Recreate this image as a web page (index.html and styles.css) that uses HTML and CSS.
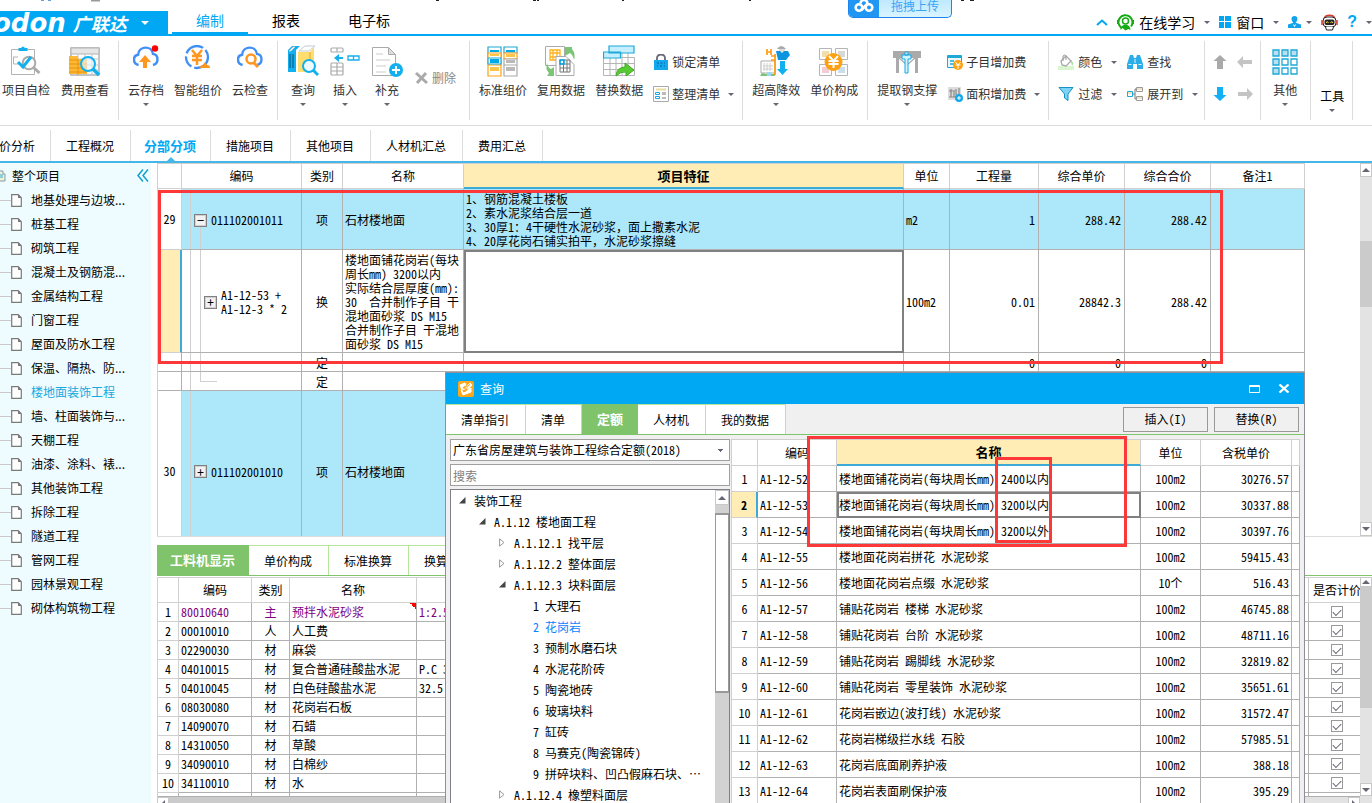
FILE: index.html
```html
<!DOCTYPE html>
<html lang="zh-CN">
<head>
<meta charset="utf-8">
<title>广联达 计价</title>
<link rel="stylesheet" href="styles.css">
</head>
<body>
<svg class="defs" aria-hidden="true">
  <symbol id="doc" viewBox="0 0 11 13"><path d="M.7.7h6.5l3.1 3.1v8.5H.7z" fill="#fff" stroke="#7a7a7a" stroke-width="1.2"/><path d="M7 .5v3.6h3.6z" fill="#7a7a7a"/></symbol>
  <symbol id="open" viewBox="0 0 7 7"><path d="M6.5 0v6.5H0z" fill="#444"/></symbol>
  <symbol id="shut" viewBox="0 0 6 9"><path d="M.6 .8v7.4L5 4.500z" fill="#fff" stroke="#999"/></symbol>
  <symbol id="cloud" viewBox="0 0 28 28"><path d="M6 21.500C-.5 20-.5 11.500 5.500 10.500 6 1 20 0 21.500 9.500c6.500 1 6.500 10.500 0 12" fill="none" stroke="#3f8ff7" stroke-width="2.600"/></symbol>
</svg>

<header class="top">
  <svg class="strip" width="1000" height="4" aria-hidden="true"><path d="M41 0h3M48 0h3" stroke="#6b9bd0" stroke-width="2"/><path d="M91 0h9" stroke="#999" stroke-width="3"/><path d="M436 0h3M533 0h3M537 0h2M622 0h2M749 0h2M961 0h3M970 0h4" stroke="#222" stroke-width="2"/></svg>
  <button class="brand"><span class="word">odon</span><span class="cn">广联达</span><i class="arrow"></i></button>
  <nav class="main-tabs">
    <button class="on">编制</button><button>报表</button><button>电子标</button>
  </nav>
  <div class="tools">
    <button aria-label="收起"><svg width="12" height="7" viewBox="0 0 12 7"><path d="M1 6l5-4.500L11 6" fill="none" stroke="#00a8f3" stroke-width="2"/></svg></button>
    <button class="study"><svg width="17" height="17" viewBox="0 0 17 17"><path d="M4.500 14A7 7 0 1 1 14 12.500" fill="none" stroke="#14ab14" stroke-width="2"/><circle cx="8.500" cy="7" r="3" fill="none" stroke="#14ab14" stroke-width="1.500"/><path d="M3.500 16c0-7 10-7 10 0l-2-1-3 1.500L5.500 14z" fill="#14ab14"/><path d="M.5 6v4M16.500 6v4" stroke="#14ab14"/></svg>在线学习<i class="arrow"></i></button>
    <button class="win"><svg width="12" height="12" viewBox="0 0 12 12"><path d="M0 0h5v5H0zM6 0h6v5H6zM0 6h5v6H0zM6 6h6v6H6z" fill="#00a8f3"/></svg>窗口<i class="arrow"></i></button>
    <button class="user" aria-label="用户"><svg width="13" height="12" viewBox="0 0 13 12"><path d="M6.500 0C2.500 0 3 4.500 5.300 6.800L0 8.500V12h13V8.500L7.700 6.800C10 4.500 10.500 0 6.500 0z" fill="#14a3ea"/><path d="M5.500 8.500l1 2 1-2" fill="none" stroke="#fff"/></svg><i class="arrow"></i></button>
    <button aria-label="助手"><svg width="17" height="17" viewBox="0 0 17 17"><path d="M3 5C4 0 13 0 14 5" fill="none" stroke="#e03a2f" stroke-width="1.500"/><rect x="2" y="3" width="13" height="10" rx="4" fill="#fff" stroke="#222"/><rect x="3.500" y="5.500" width="10" height="5.500" rx="2" fill="#222"/><path d="M5 9l1.200-1.500L7.500 9M9.500 9l1.200-1.500L12 9" fill="none" stroke="#ffe03a"/><path d="M1 6v5M16 6v5" stroke="#e03a2f" stroke-width="1.500"/><path d="M4.500 13l1 3h6l1-3" fill="#fff" stroke="#222"/></svg></button>
    <button class="help" aria-label="帮助">?</button><i class="arrow"></i>
  </div>
  <button class="upload"><svg width="30" height="17" viewBox="0 0 30 17"><path d="M0 0h30v17H3q-3 0-3-3z" fill="#2196f3"/><g fill="none" stroke="#fff" stroke-width="2.600"><circle cx="10" cy="7.500" r="3.300"/><circle cx="20" cy="7.500" r="3.300"/><path d="M11.500 3.500a3.500 3.500 0 1 1 7 0L12.500 10"/></g></svg><span>拖拽上传</span></button>
</header>

<section class="ribbon">
  <div class="group first">
    <button class="big"><svg viewBox="0 0 32 32"><path d="M1.500 4.500h23v25h-23z" fill="#fff" stroke="#b3b3b3"/><path d="M8.500 5V3h2.500q2-3 4 0h2.500v3h-9z" fill="#12b0ee"/><path d="M3 12h5M3.500 12v7h5" fill="none" stroke="#b3b3b3"/><circle cx="19" cy="18" r="6.300" fill="#fff" stroke="#aaa" stroke-width="2"/><path d="M8 17l5 5 8-10" fill="none" stroke="#12b0ee" stroke-width="3"/><path d="M23.500 22.500l6 5.500" stroke="#aaa" stroke-width="3"/></svg>项目自检</button>
    <button class="big"><svg viewBox="0 0 32 32"><path d="M2 3h28v27H2z" fill="#fff" stroke="#b3b3b3" stroke-width="1.500"/><path d="M2 3h28v6H2z" fill="#e6e6e6" stroke="#b3b3b3"/><path d="M2 14h28M2 20h28M2 25h28M9 9v21M16 9v21M23 9v21" stroke="#c4c4c4"/><path d="M0 11h9v3h9v15H0z" fill="#ffb834"/><path d="M0 15h9M0 19h18M0 23h18M0 27h18M9 14v16" stroke="#e6930e"/><circle cx="19" cy="19" r="7" fill="#e5f5fd" fill-opacity=".65" stroke="#12b0ee" stroke-width="2"/><path d="M24 24l6 6" stroke="#12b0ee" stroke-width="3.500"/></svg>费用查看</button>
  </div>
  <div class="group">
    <button class="big"><svg viewBox="0 0 32 32"><use href="#cloud" x="3" y="0" width="26" height="26"/><path d="M15 10l-6 7h4v6h4v-6h4z" fill="#ff961f"/><circle cx="25" cy="3.500" r="3.200" fill="#f00"/></svg>云存档<i class="arrow"></i></button>
    <button class="big"><svg viewBox="0 0 32 32"><circle cx="15" cy="12" r="11" fill="none" stroke="#3f8ff7" stroke-width="2.300" stroke-dasharray="20 3 12 3"/><path d="M10 5l5 6 5-6M10 11h10M10 15h10M15 11v9" fill="none" stroke="#ff961f" stroke-width="2.500"/><path d="M18 23q0-3 3-3 2-5 4 0 3 0 3 3z" fill="#ff961f"/></svg>智能组价</button>
    <button class="big"><svg viewBox="0 0 32 32"><use href="#cloud" x="3" y="0" width="26" height="26"/><circle cx="17" cy="14" r="4.500" fill="#fff" stroke="#ff961f" stroke-width="2.500"/><path d="M20 18l4 4" stroke="#ff961f" stroke-width="3"/></svg>云检查</button>
  </div>
  <div class="group">
    <button class="big"><svg viewBox="0 0 32 32"><path d="M1 5l4-4h8L9 5v22H1z" fill="#12b0ee"/><path d="M2 6l4-4h2L4 6zM12 6l6-5h10l-6 5z" fill="#fff" stroke="#c5cbd0"/><path d="M3 9v14M6 9v14" stroke="#07507c"/><path d="M11 7h12l4-5v25H11z" fill="#ffdd6e"/><path d="M23 7v20" stroke="#e3a726"/><circle cx="22" cy="21" r="6" fill="#eefaff" stroke="#12b0ee" stroke-width="2"/><path d="M26 25l5 5" stroke="#12b0ee" stroke-width="3"/></svg>查询<i class="arrow"></i></button>
    <button class="big"><svg viewBox="0 0 32 32"><g fill="#fff" stroke="#aaa" stroke-width="1.200"><rect x="2" y="3" width="12" height="4" rx="1"/><rect x="2" y="18" width="12" height="12" rx="1"/><path d="M2 22h12M2 26h12M8 18v12M8 3v4"/></g><path d="M5 13l5-4v3h4v2h-4v3z" fill="#12b0ee"/><path d="M19 11h11v4H19zM24.500 11v4" fill="#fff" stroke="#12b0ee" stroke-width="1.300"/></svg>插入<i class="arrow"></i></button>
    <button class="big"><svg viewBox="0 0 32 32"><path d="M1.500 2.500h16l7 7v21h-23z" fill="#fff" stroke="#aaa"/><path d="M17.500 2.500v7h7z" fill="#ddd" stroke="#aaa"/><path d="M5 9h7M5 15h14M5 21h10M5 27h10" stroke="#ddd" stroke-width="1.500"/><circle cx="25" cy="25" r="7" fill="#12b0ee"/><path d="M25 21v8M21 25h8" stroke="#fff" stroke-width="2"/></svg>补充<i class="arrow"></i></button>
    <button class="small del"><svg viewBox="0 0 16 16"><path d="M3 3l11 10M13 3L4 13" stroke="#aaa" stroke-width="3"/></svg>删除</button>
  </div>
  <div class="group lists">
    <button class="big"><svg viewBox="0 0 32 32"><g fill="#fff" stroke-width="1.200"><path d="M1 2h13v10H1zM17 2h13v6H17z" stroke="#1ca9d6"/><path d="M17 8h13v6H17z" stroke="#ffa012"/><path d="M17 14h13v17H17zM17 20h13" stroke="#aaa"/><path d="M1 8h13v23H1zM1 20h13" stroke="#ffa012"/><path d="M1 13h13v6H1z" stroke="#1ca9d6"/></g><path d="M3 5h9v2H3zM19 5h9v2h-9zM3 14h9v4H3z" fill="#00a8e8"/><path d="M3 9h9v2H3zM19 9h9v3h-9zM3 22h9v4H3z" fill="#ffc54a"/><path d="M19 15h9v3h-9zM19 22h9v4h-9z" fill="#b9b9b9"/></svg>标准组价</button>
    <button class="big"><svg viewBox="0 0 32 32"><path d="M.500 1.500h19v19H.500z" fill="#fff" stroke="#aaa"/><path d="M5 5h10v10H5zM5 8h10M5 12h10M8 5v10M12 5v10" fill="none" stroke="#ffb31c" stroke-width="1.300"/><path d="M11 11.500h10l8 8v11H11z" fill="#fff" stroke="#aaa"/><path d="M15 15h10v12H15zM15 19h10M15 23h10M18.500 15v12M22 15v12" fill="none" stroke="#777"/><path d="M15 15h4v4h-4z" fill="none" stroke="#00a8e8" stroke-width="1.500"/><path d="M20 2h7v2q4 5 2 11-1-5-4-7l-5 3zM2 18q1 5 4 6l3-2v9H2l2-3q-4-4-2-10z" fill="#7cc576"/></svg>复用数据</button>
    <button class="big"><svg viewBox="0 0 32 32"><path d="M.500 12.500h31v18H.500zM.500 18.500h31M.500 24.500h31M7 12.500v18M13 12.500v18M19 7v23M25 7v23" fill="#fff" stroke="#b5b5b5"/><path d="M6 1h25v7H6zM.500 7h17v6H.500z" fill="#c5efff" stroke="#1ca9d6" stroke-width="1.200"/><path d="M13 31q1-9 9-9v-4l9 7-8 6v-4q-5-1-10 4z" fill="#58cb31" stroke="#3daa25"/></svg>替换数据</button>
    <div class="stack">
      <button class="small"><svg viewBox="0 0 16 16"><path d="M4 7V4a4 3.500 0 0 1 8 0v3" fill="none" stroke="#666674" stroke-width="1.800"/><path d="M1 6h14v10H1z" fill="#12a8ee"/><path d="M4 9h2m1.500 0h2M11 9h1M4 12h1m2 0h2m2 0h1" stroke="#095f9b"/></svg>锁定清单</button>
      <button class="small"><svg viewBox="0 0 16 16"><path d="M.500.500h15v15H.500z" fill="#fff" stroke="#aaa"/><path d="M3 2.500h10v2H3z" fill="#eadba1"/><path d="M2.500 6.500h4v2h-4zM2.500 10.500h4v2h-4z" fill="#fff" stroke="#1aa9e0"/><path d="M9 6h4v3H9zM9 11h4v2H9z" fill="#bbb"/></svg>整理清单<i class="arrow"></i></button>
    </div>
  </div>
  <div class="group">
    <button class="big"><svg viewBox="0 0 32 32"><path d="M1 16h14v12H1z" fill="#fff" stroke="#aaa"/><path d="M4 18v8M7 18v8M10 18v8M3 21h10M3 24h10" stroke="#ccc"/><path d="M0 31q2-5 5-2l10 0v2z" fill="#7cc576"/><path d="M7 27h4v4H7z" fill="#9bd9f2"/><path d="M15 9v21M11 15h5M16 11h-5M7 4v6M11 4v6M7 7h4" fill="none" stroke="#ff9c12" stroke-width="1.700"/><path d="M17 4q4-6 9 0z" fill="#aaa"/><path d="M19 4h6v2q-3 2-6 0z" fill="#ddd"/><path d="M16 6h4l2 2 2-2h4l2 4-4 5h-8z" fill="#0d94df"/><path d="M20 16h5v8h3l-5.500 6-5.500-6h3z" fill="#12b0ee"/></svg>超高降效<i class="arrow"></i></button>
    <button class="big"><svg viewBox="0 0 32 32"><g fill="#fff" stroke="#b5b5b5"><path d="M1.500 3.500h12v11h-12zM17.500 3.500h12v11h-12zM1.500 19.500h12v11h-12zM17.500 19.500h12v11h-12z"/></g><path d="M4 6h7v6H4z" fill="#f1deab"/><path d="M20 6h7v6h-7z" fill="#d8d8d8"/><path d="M4 22h7v6H4z" fill="#f2cdd1"/><path d="M20 22h7v6h-7z" fill="#c9deef"/><circle cx="15.500" cy="17" r="9" fill="#ffa10e"/><path d="M11 11l4.500 5 4.500-5M10.500 16h10M10.500 19h10M15.500 16v7" fill="none" stroke="#fff" stroke-width="2"/></svg>单价构成</button>
  </div>
  <div class="group fees">
    <button class="big"><svg viewBox="0 0 32 32"><path d="M2 6h28v7H2zM5 12h3v16H5zM24 12h3v16h-3z" fill="#aaa"/><path d="M8 13l8 7 8-7" fill="none" stroke="#aaa" stroke-width="1.300"/><path d="M11 10h9v4h-3v14h-3V14h-3zM14 7h3v3h-3z" fill="#d5f3ff" stroke="#12a8e4"/></svg>提取钢支撑<i class="arrow"></i></button>
    <div class="stack">
      <button class="small"><svg viewBox="0 0 16 16"><path d="M.500 1.500h14v12H.500z" fill="#e8f8ff" stroke="#1ca9d6"/><path d="M1 2h13v2H1z" fill="#1ca9d6"/><path d="M3 7h4M3 10h4" stroke="#1ca9d6" stroke-width="1.500"/><circle cx="11" cy="11" r="5" fill="#ffa10e"/><path d="M8.500 8l2.500 3 2.500-3M8.500 11h5M11 11v4" fill="none" stroke="#fff"/></svg>子目增加费</button>
      <button class="small"><svg viewBox="0 0 16 16"><path d="M1 1h13v13H1z" fill="#ddd"/><path d="M2 5h4M4 3v8M7 4v7M9 3v6M12 2v8M2 11h8" stroke="#888" stroke-width="1.200"/><circle cx="12" cy="12" r="4" fill="#12a8ee"/><path d="M12 10v4M10 12h4" stroke="#fff"/></svg>面积增加费<i class="arrow"></i></button>
    </div>
  </div>
  <div class="group half">
    <div class="stack">
      <button class="small"><svg viewBox="0 0 16 16"><path d="M0 12h16v4H0z" fill="#d9f5cf"/><path d="M3 7l5-5 5 5-5 5-4-1z" fill="#fff" stroke="#aaa" stroke-width="1.300"/><path d="M5 7V2q2-2 3 0v4" fill="none" stroke="#999"/><path d="M13 6q3 3 1 6z" fill="#8ac97b"/></svg>颜色<i class="arrow"></i></button>
      <button class="small"><svg viewBox="0 0 16 16"><path d="M1 1.500h14L10 8v6.500L6.500 12V8z" fill="#7bd3f5" stroke="#1591c4"/></svg>过滤<i class="arrow"></i></button>
    </div>
    <div class="stack">
      <button class="small"><svg viewBox="0 0 16 16"><path d="M3 1h3l1 3h2l1-3h3l3 9v5h-6v-5H6v5H0v-5z" fill="#2aaeea"/><path d="M1.500 10.500h3M11.500 10.500h3M8 5v4" stroke="#dff5ff"/></svg>查找</button>
      <button class="small"><svg viewBox="0 0 16 16"><path d="M5 8h3M8 3v10M8 3h2M8 13h2" fill="none" stroke="#777"/><path d="M.500 5.500h5v5h-5z" fill="#fff" stroke="#1ca9d6"/><path d="M9.500 1.500h6v4h-6zM9.500 10.500h6v4h-6z" fill="#fff" stroke="#999"/><path d="M10 3h5M10 12h5M1 7h4" stroke="#e3c689"/></svg>展开到<i class="arrow"></i></button>
    </div>
  </div>
  <div class="group arrows">
    <button aria-label="上移"><svg viewBox="0 0 16 16"><path d="M8 1l6.500 6H11v8H5V7H1.500z" fill="#aaa"/></svg></button>
    <button aria-label="左移"><svg viewBox="0 0 16 16"><path d="M0 8l6-6v4h9v4H6v4z" fill="#c4c4c4"/></svg></button>
    <button aria-label="下移"><svg viewBox="0 0 16 16"><path d="M8 15l6.500-6H11V1H5v8H1.500z" fill="#12b0f4"/></svg></button>
    <button aria-label="右移"><svg viewBox="0 0 16 16"><path d="M16 8l-6-6v4H1v4h9v4z" fill="#c4c4c4"/></svg></button>
  </div>
  <div class="group other">
    <button class="big"><svg viewBox="0 0 32 32"><g stroke="#1ca9d6" stroke-width="1.300" fill="#fff"><path d="M13 14h6v6h-6zM22 14h6v6h-6zM13 23h6v6h-6zM22 23h6v6h-6z"/><path d="M4 5h6v6H4zM13 5h6v6h-6zM22 5h6v6h-6zM4 14h6v6H4zM4 23h6v6H4z" fill="#b9dff1"/></g></svg>其他<i class="arrow"></i></button>
  </div>
  <div class="group kit">
    <button class="big plain">工具<i class="arrow"></i></button>
  </div>
</section>

<nav class="doc-tabs">
  <button class="cut">价分析</button><button>工程概况</button><button class="on">分部分项</button><button>措施项目</button><button>其他项目</button><button>人材机汇总</button><button>费用汇总</button>
</nav>

<main class="work">
  <aside class="side">
    <div class="root"><svg width="8" height="12" viewBox="0 0 8 12"><path d="M0 1h3v3h2v7H0" fill="#e8f3d8" stroke="#8a9aa5"/><path d="M0 5h3M0 7h3" stroke="#3ca6d8"/></svg><span>整个项目</span><svg class="fold" width="12" height="13" viewBox="0 0 12 13"><path d="M6 .5L1 6.500l5 6M11 .5L6 6.500l5 6" fill="none" stroke="#12a0cc" stroke-width="1.500"/></svg></div>
    <ul>
      <li><svg><use href="#doc"/></svg>地基处理与边坡...</li>
      <li><svg><use href="#doc"/></svg>桩基工程</li>
      <li><svg><use href="#doc"/></svg>砌筑工程</li>
      <li><svg><use href="#doc"/></svg>混凝土及钢筋混...</li>
      <li><svg><use href="#doc"/></svg>金属结构工程</li>
      <li><svg><use href="#doc"/></svg>门窗工程</li>
      <li><svg><use href="#doc"/></svg>屋面及防水工程</li>
      <li><svg><use href="#doc"/></svg>保温、隔热、防...</li>
      <li class="on"><svg><use href="#doc"/></svg>楼地面装饰工程</li>
      <li><svg><use href="#doc"/></svg>墙、柱面装饰与...</li>
      <li><svg><use href="#doc"/></svg>天棚工程</li>
      <li><svg><use href="#doc"/></svg>油漆、涂料、裱...</li>
      <li><svg><use href="#doc"/></svg>其他装饰工程</li>
      <li><svg><use href="#doc"/></svg>拆除工程</li>
      <li><svg><use href="#doc"/></svg>隧道工程</li>
      <li><svg><use href="#doc"/></svg>管网工程</li>
      <li><svg><use href="#doc"/></svg>园林景观工程</li>
      <li><svg><use href="#doc"/></svg>砌体构筑物工程</li>
    </ul>
  </aside>

  <div class="panes">
    <section class="bill">
      <div class="bill-scroll">
      <table class="grid bill-grid">
        <colgroup><col class="w-no"><col class="w-code"><col class="w-kind"><col class="w-name"><col><col class="w-unit"><col class="w-qty"><col class="w-price"><col class="w-price"><col class="w-note"></colgroup>
        <thead><tr><th></th><th>编码</th><th>类别</th><th>名称</th><th class="hot">项目特征</th><th>单位</th><th>工程量</th><th>综合单价</th><th>综合合价</th><th>备注1</th></tr></thead>
        <tbody>
          <tr class="r29 blue"><td class="no">29</td><td class="tree t-open"><div><button class="exp">−</button>011102001011</div></td><td class="c">项</td><td>石材楼地面</td><td>1、钢筋混凝土楼板<br>2、素水泥浆结合层一道<br>3、30厚1：4干硬性水泥砂浆<span class="full">，</span>面上撒素水泥<br>4、20厚花岗石铺实拍平<span class="full">，</span>水泥砂浆擦缝</td><td>m2</td><td class="r">1</td><td class="r">288.42</td><td class="r">288.42</td><td></td></tr>
          <tr class="rsub"><td class="no cur"></td><td class="tree t-sub"><div><button class="exp">+</button><span>A1-12-53 +<br>A1-12-3 * 2</span></div></td><td class="c">换</td><td>楼地面铺花岗岩(每块<br>周长mm) 3200以内<br>实际结合层厚度(mm):<br>30&nbsp; 合并制作子目 干<br>混地面砂浆 DS M15<br>合并制作子目 干混地<br>面砂浆 DS M15</td><td class="sel"></td><td>100m2</td><td class="r">0.01</td><td class="r">28842.3</td><td class="r">288.42</td><td></td></tr>
          <tr class="rmin"><td></td><td class="tree t-line"></td><td class="c">定</td><td></td><td></td><td></td><td class="r">0</td><td class="r">0</td><td class="r">0</td><td></td></tr>
          <tr class="rmin"><td></td><td class="tree t-end"></td><td class="c">定</td><td></td><td></td><td></td><td></td><td></td><td></td><td></td></tr>
          <tr class="r30 blue"><td class="no">30</td><td class="tree"><div><button class="exp">+</button>011102001010</div></td><td class="c">项</td><td>石材楼地面</td><td></td><td></td><td></td><td></td><td></td><td></td></tr>
        </tbody>
      </table>
      </div>
      <div class="vbar"><i class="up"></i><b></b><i class="down"></i></div>
    </section>

    <nav class="sub-tabs"><button class="on">工料机显示</button><button>单价构成</button><button>标准换算</button><button>换算信息</button></nav>

    <section class="detail">
      <div class="detail-scroll">
      <table class="grid detail-grid">
        <colgroup><col class="d-no"><col class="d-code"><col class="d-kind"><col class="d-name"><col><col class="d-check"></colgroup>
        <thead><tr><th></th><th>编码</th><th>类别</th><th>名称</th><th></th><th class="last">是否计价</th></tr></thead>
        <tbody>
          <tr class="main-mat"><td class="no">1</td><td>80010640</td><td class="c">主</td><td class="flag">预拌水泥砂浆</td><td>1:2.5</td><td class="c"><input type="checkbox" aria-label="是否计价 1" checked></td></tr>
          <tr><td class="no">2</td><td>00010010</td><td class="c">人</td><td>人工费</td><td></td><td class="c"><input type="checkbox" aria-label="是否计价 2" checked></td></tr>
          <tr><td class="no">3</td><td>02290030</td><td class="c">材</td><td>麻袋</td><td></td><td class="c"><input type="checkbox" aria-label="是否计价 3" checked></td></tr>
          <tr><td class="no">4</td><td>04010015</td><td class="c">材</td><td>复合普通硅酸盐水泥</td><td>P.C 32.5</td><td class="c"><input type="checkbox" aria-label="是否计价 4" checked></td></tr>
          <tr><td class="no">5</td><td>04010045</td><td class="c">材</td><td>白色硅酸盐水泥</td><td>32.5</td><td class="c"><input type="checkbox" aria-label="是否计价 5" checked></td></tr>
          <tr><td class="no">6</td><td>08030080</td><td class="c">材</td><td>花岗岩石板</td><td></td><td class="c"><input type="checkbox" aria-label="是否计价 6" checked></td></tr>
          <tr><td class="no">7</td><td>14090070</td><td class="c">材</td><td>石蜡</td><td></td><td class="c"><input type="checkbox" aria-label="是否计价 7" checked></td></tr>
          <tr><td class="no">8</td><td>14310050</td><td class="c">材</td><td>草酸</td><td></td><td class="c"><input type="checkbox" aria-label="是否计价 8" checked></td></tr>
          <tr><td class="no">9</td><td>34090010</td><td class="c">材</td><td>白棉纱</td><td></td><td class="c"><input type="checkbox" aria-label="是否计价 9" checked></td></tr>
          <tr><td class="no">10</td><td>34110010</td><td class="c">材</td><td>水</td><td></td><td class="c"><input type="checkbox" aria-label="是否计价 10" checked></td></tr>
          <tr><td></td><td></td><td></td><td></td><td></td><td></td></tr>
        </tbody>
      </table>
      <div class="hbar"><i class="left"></i><b></b><i class="right"></i></div>
      </div>
      <div class="vbar"><i class="up"></i><b></b><i class="down"></i></div>
    </section>
  </div>

  <section class="dialog" role="dialog" aria-labelledby="dlg-title">
    <header class="title">
      <svg width="16" height="16" viewBox="0 0 16 16"><rect width="16" height="16" rx="2" fill="#fba919"/><path d="M2 4l5-2 1 2-4 2 2 3 6-7 2 2-6 7-3 1zM3 9l2 5 8-3V7" fill="#fff" stroke="#fff"/><path d="M5 11l7-8" stroke="#fba919"/></svg>
      <h2 id="dlg-title">查询</h2>
      <button class="max" aria-label="最大化"><svg width="11" height="8" viewBox="0 0 11 8"><path d="M.500.500h10v7H.500zM0 1.500h11" fill="none" stroke="#fff"/></svg></button>
      <button aria-label="关闭"><svg width="12" height="9" viewBox="0 0 12 9"><path d="M1.500.5l9 8M10.500.5l-9 8" stroke="#fff" stroke-width="2.300"/></svg></button>
    </header>
    <div class="bar">
      <nav class="q-tabs"><button>清单指引</button><button>清单</button><button class="on">定额</button><button>人材机</button><button>我的数据</button></nav>
      <button class="act">插入(I)</button><button class="act">替换(R)</button>
    </div>
    <div class="q-body">
      <div class="q-left">
        <select aria-label="定额库"><option>广东省房屋建筑与装饰工程综合定额(2018)</option></select>
        <input type="text" placeholder="搜索" aria-label="搜索">
        <div class="q-tree">
          <ul>
            <li class="l1"><svg width="7" height="7"><use href="#open"/></svg>装饰工程</li>
            <li class="l2"><svg width="7" height="7"><use href="#open"/></svg>A.1.12 楼地面工程</li>
            <li class="l3"><svg width="6" height="9"><use href="#shut"/></svg>A.1.12.1 找平层</li>
            <li class="l3"><svg width="6" height="9"><use href="#shut"/></svg>A.1.12.2 整体面层</li>
            <li class="l3 l3o"><svg width="7" height="7"><use href="#open"/></svg>A.1.12.3 块料面层</li>
            <li class="l4">1 大理石</li>
            <li class="l4 on">2 花岗岩</li>
            <li class="l4">3 预制水磨石块</li>
            <li class="l4">4 水泥花阶砖</li>
            <li class="l4">5 陶瓷地砖</li>
            <li class="l4">6 玻璃块料</li>
            <li class="l4">7 缸砖</li>
            <li class="l4">8 马赛克(陶瓷锦砖)</li>
            <li class="l4">9 拼碎块料、凹凸假麻石块、⋯</li>
            <li class="l3"><svg width="6" height="9"><use href="#shut"/></svg>A.1.12.4 橡塑料面层</li>
          </ul>
          <div class="tbar"><i class="up"></i><b></b></div>
        </div>
      </div>
      <div class="q-right">
        <table class="grid q-grid">
          <colgroup><col class="q-no"><col class="q-code"><col><col class="q-unit"><col class="q-price"><col class="q-end"></colgroup>
          <thead><tr><th></th><th>编码</th><th class="hot">名称</th><th>单位</th><th>含税单价</th><th></th></tr></thead>
          <tbody>
            <tr><td class="no">1</td><td>A1-12-52</td><td>楼地面铺花岗岩(每块周长mm) 2400以内</td><td class="c">100m2</td><td class="r">30276.57</td><td></td></tr>
            <tr><td class="no cur">2</td><td>A1-12-53</td><td class="sel">楼地面铺花岗岩(每块周长mm) 3200以内</td><td class="c">100m2</td><td class="r">30337.88</td><td></td></tr>
            <tr><td class="no">3</td><td>A1-12-54</td><td>楼地面铺花岗岩(每块周长mm) 3200以外</td><td class="c">100m2</td><td class="r">30397.76</td><td></td></tr>
            <tr><td class="no">4</td><td>A1-12-55</td><td>楼地面花岗岩拼花 水泥砂浆</td><td class="c">100m2</td><td class="r">59415.43</td><td></td></tr>
            <tr><td class="no">5</td><td>A1-12-56</td><td>楼地面花岗岩点缀 水泥砂浆</td><td class="c">10个</td><td class="r">516.43</td><td></td></tr>
            <tr><td class="no">6</td><td>A1-12-57</td><td>铺贴花岗岩 楼梯 水泥砂浆</td><td class="c">100m2</td><td class="r">46745.88</td><td></td></tr>
            <tr><td class="no">7</td><td>A1-12-58</td><td>铺贴花岗岩 台阶 水泥砂浆</td><td class="c">100m2</td><td class="r">48711.16</td><td></td></tr>
            <tr><td class="no">8</td><td>A1-12-59</td><td>铺贴花岗岩 踢脚线 水泥砂浆</td><td class="c">100m2</td><td class="r">32819.82</td><td></td></tr>
            <tr><td class="no">9</td><td>A1-12-60</td><td>铺贴花岗岩 零星装饰 水泥砂浆</td><td class="c">100m2</td><td class="r">35651.61</td><td></td></tr>
            <tr><td class="no">10</td><td>A1-12-61</td><td>花岗岩嵌边(波打线) 水泥砂浆</td><td class="c">100m2</td><td class="r">31572.47</td><td></td></tr>
            <tr><td class="no">11</td><td>A1-12-62</td><td>花岗岩梯级拦水线 石胶</td><td class="c">100m2</td><td class="r">57985.51</td><td></td></tr>
            <tr><td class="no">12</td><td>A1-12-63</td><td>花岗岩底面刷养护液</td><td class="c">100m2</td><td class="r">388.18</td><td></td></tr>
            <tr><td class="no">13</td><td>A1-12-64</td><td>花岗岩表面刷保护液</td><td class="c">100m2</td><td class="r">395.29</td><td></td></tr>
          </tbody>
        </table>
      </div>
    </div>
  </section>

  <div class="mark m1"></div>
  <div class="mark m2"></div>
  <div class="mark m3"></div>
</main>
</body>
</html>
```
FILE: styles.css
```css
* { box-sizing: border-box; }
body {
  margin: 0;
  height: 100vh;
  display: flex;
  flex-direction: column;
  overflow: hidden;
  background: #fff;
  color: #000;
  font: 12px/14px "Noto Sans CJK SC", sans-serif;
}
button, input, select { font: inherit; color: inherit; }
button { border: 0; background: none; padding: 0; white-space: nowrap; }
ul { list-style: none; margin: 0; padding: 0; }
h2 { margin: 0; font: inherit; }
svg { display: block; flex: none; }
.defs { position: absolute; width: 0; height: 0; }
.arrow { flex: none; width: 0; height: 0; border: 3px solid transparent; border-top-color: #666674; border-bottom: 0; }

/* title row */
.top { flex: none; position: relative; display: flex; align-items: flex-end; height: 36px; border-bottom: 2px solid #00a8f3; }
.strip { position: absolute; left: 0; top: 0; }
.brand { display: flex; align-items: center; width: 168px; height: 23px; overflow: hidden; background: #00a8f3; color: #fff; }
.brand .word { margin-left: -7px; font: italic 700 26px/20px "DejaVu Sans", sans-serif; }
.brand .cn { margin-left: 7px; font-size: 18px; font-style: italic; font-weight: 700; }
.brand .arrow { margin-left: 14px; border-width: 4px 4px 0; border-top-color: #fff; }
.main-tabs { display: flex; margin-left: 4px; font-size: 14px; }
.main-tabs button { height: 25px; padding: 0 24px 1px; border-bottom: 2px solid transparent; }
.main-tabs .on { color: #00a8f3; border-color: #00a8f3; }
.tools { display: flex; align-items: center; gap: 9px; height: 24px; margin-left: auto; font-size: 14px; }
.tools button { display: flex; align-items: center; gap: 5px; }
.study .arrow, .win .arrow { margin-left: 4px; }
.tools .help { color: #00a8f3; font: 700 16px/18px "Liberation Sans", sans-serif; }
.upload { position: absolute; left: 848px; top: 0; display: flex; height: 18px; border: 1px solid #1c86ee; border-top: 0; border-radius: 0 0 5px 5px; overflow: hidden; background: linear-gradient(#bfe9ff, #d9f4ff); color: #3ba4f5; }
.upload span { padding: 0 12px; line-height: 12px; }

/* ribbon */
.ribbon { flex: none; display: flex; height: 90px; padding-top: 5px; border-bottom: 1px solid #dcdcdc; color: #333; }
.group { display: flex; gap: 10px; height: 79px; padding: 0 9px; border-right: 1px solid #dcdcdc; }
.group.first { padding-left: 2px; gap: 11px; }
.big { display: flex; flex-direction: column; align-items: center; min-width: 32px; padding-top: 4px; height: 70px; line-height: 18px; color: inherit; }
.big svg { width: 32px; height: 32px; margin-bottom: 4px; }
.big .arrow { margin-top: 4px; }
.small { display: flex; align-items: center; gap: 3px; height: 18px; color: inherit; }
.small svg { width: 16px; height: 16px; }
.small .arrow { margin-left: 5px; }
.stack { display: flex; flex-direction: column; gap: 14px; padding-top: 12px; }
.del { margin: 28px 4px 0 0; color: #888; }
.lists { padding-right: 8px; }
.fees { gap: 10px; padding-right: 8px; }
.half { padding: 0 6px 0 9px; }
.half .stack .small { gap: 4px; }
.arrows { display: grid; grid-template-columns: 16px 16px; column-gap: 9px; row-gap: 16px; align-content: start; padding: 13px 7px 0; }
.arrows svg { width: 16px; height: 16px; }
.other { padding: 0 9px 0 8px; }
.kit { padding: 0 8px 0 9px; }
.plain { padding-top: 46px; color: #000; min-width: 24px; }

/* document tabs */
.doc-tabs { flex: none; display: flex; height: 37px; padding-top: 4px; border-bottom: 2px solid #45b6e8; }
.doc-tabs button { position: relative; padding: 0 16px 0 15px; border-right: 1px solid #dcdcdc; }
.doc-tabs .cut { padding: 0 15px 0 0; margin-left: -1px; }
.doc-tabs .on { color: #00a8f3; font-weight: 700; font-size: 13px; padding: 0 14px 0 13px; }
.doc-tabs .on::after { content: ""; position: absolute; left: 50%; bottom: 0; margin-left: -4px; border: 4px solid transparent; border-bottom-color: #45b6e8; border-top: 0; }

/* work area */
.work { flex: 1; min-height: 0; position: relative; display: flex; gap: 6px; font-feature-settings: "hwid"; }
.full { font-feature-settings: normal; }
.side { flex: none; width: 151px; background: #effcff; font-feature-settings: normal; }
.root { display: flex; align-items: center; height: 25px; }
.root span { margin-left: 4px; }
.fold { margin-left: auto; margin-right: 2px; }
.side li { display: flex; align-items: center; height: 24px; white-space: nowrap; }
.side li::before { content: ""; width: 11px; border-top: 1px solid #c9c9c9; }
.side li svg { width: 11px; height: 13px; margin-right: 9px; }
.side .on { color: #12aadf; }
.panes { flex: 1; min-width: 0; display: flex; flex-direction: column; }

.grid { width: 100%; table-layout: fixed; border-collapse: separate; border-spacing: 0; border-left: 1px solid #d0d0d0; }
.grid th, .grid td { padding: 0 2px; border-right: 1px solid #b0b0b0; border-bottom: 1px solid #b0b0b0; text-align: left; font-weight: 400; white-space: nowrap; overflow: hidden; }
.grid th { border-color: #d0d0d0; text-align: center; padding: 0; }
.grid .hot { background: #ffedb5; font-weight: 700; font-size: 13px; border-bottom: 2px solid #3da9d6; }
.grid .c { text-align: center; }
.grid .r { text-align: right; }
.grid .no { text-align: center; border-color: #d0d0d0; padding: 0; }
.grid .cur { background: #ffedb5; border-right: 2px solid #3da9d6; font-weight: 700; }
.grid .sel { outline: 2px solid #808080; outline-offset: -2px; }

.bill { flex: none; display: flex; height: 374px; gap: 55px; border-bottom: 1px solid #dcdcdc; }
.bill-scroll { flex: 1; min-width: 0; overflow: hidden; border-top: 1px solid #d0d0d0; }
.w-no { width: 24px; } .w-code { width: 120px; } .w-kind { width: 41px; } .w-name { width: 121px; }
.w-unit { width: 46px; } .w-qty { width: 89px; } .w-price { width: 86px; } .w-note { width: 94px; }
.bill-grid th { height: 25px; }
.bill-grid td { padding-top: 2px; }
.bill-grid td.r { padding-right: 3px; }
.r29 { height: 61px; } .rsub { height: 103px; } .rmin { height: 19px; } .r30 { height: 160px; }
.blue td:not(.no) { background-color: #ade8fa; }
.grid .tree { padding-left: 12px; background-repeat: no-repeat; background-image: linear-gradient(#d0d0d0, #d0d0d0); background-size: 1px 100%; background-position: 8px 0; }
.tree div { display: flex; align-items: center; gap: 4px; }
.grid .t-sub { padding-left: 22px; }
.grid .t-sub, .grid .t-line { background-image: linear-gradient(#d0d0d0, #d0d0d0), linear-gradient(#d0d0d0, #d0d0d0); background-size: 1px 100%; background-position: 8px 0, 18px 0; }
.grid .t-open { background-image: linear-gradient(#d0d0d0, #d0d0d0), linear-gradient(#d0d0d0, #d0d0d0); background-size: 1px 100%, 1px 50%; background-position: 8px 0, 18px 100%; }
.grid .t-end { background-image: linear-gradient(#d0d0d0, #d0d0d0), linear-gradient(#d0d0d0, #d0d0d0), linear-gradient(#d0d0d0, #d0d0d0); background-size: 1px 100%, 1px 50%, 17px 1px; background-position: 8px 0, 18px 0, 18px 50%; }
.exp { width: 13px; height: 13px; border: 1px solid #808080; background: #f2f2f2; box-shadow: inset 0 0 0 1px #d0d0d0; line-height: 10px; font-size: 13px; text-align: center; }

/* scroll bars */
.vbar, .tbar { flex: none; display: flex; flex-direction: column; width: 12px; background: #e3e3e3; }
.vbar b { height: 66px; margin-top: 64px; background: #cbcbcb; }
.up, .down, .left, .right { display: flex; align-items: center; justify-content: center; width: 12px; height: 14px; background: #fff; border: 1px solid #c8c8c8; }
.up::before, .down::before, .left::before, .right::before { content: ""; border: 4px solid transparent; }
.up::before { border-bottom-color: #666674; border-top: 0; }
.down::before { border-top-color: #666674; border-bottom: 0; }
.left::before { border-right-color: #666674; border-left: 0; }
.right::before { border-left-color: #666674; border-right: 0; }
.vbar .down { margin-top: auto; }

.sub-tabs { flex: none; display: flex; height: 31px; margin-top: 8px; border-bottom: 1px solid #7fc36a; }
.sub-tabs button { padding: 0 16px 0 15px; border-right: 1px solid #b7e59c; border-top: 1px solid #b7e59c; }
.sub-tabs .on { padding: 0 14px 0 13px; background: #7fc36a; color: #fff; font-weight: 700; font-size: 13px; border: 0; }
.detail { flex: 1; min-height: 0; display: flex; margin-top: 1px; }
.detail-scroll { flex: 1; min-width: 0; display: flex; flex-direction: column; overflow: hidden; border-top: 1px solid #d0d0d0; }
.d-no { width: 21px; } .d-code { width: 73px; } .d-kind { width: 38px; } .d-name { width: 127px; } .d-check { width: 51px; }
.detail-grid tr { height: 19px; }
.detail-grid tbody tr:last-child { height: 4px; }
.detail-grid th { height: 25px; }
.detail-grid .last { text-align: left; padding-left: 4px; }
.detail-grid td:last-child, .detail-grid .last { border-right: 0; }
.detail-grid td:last-child { padding: 0 0 0 4px; }
.detail .up { height: 10px; }
.detail .vbar b { margin: 0; height: 121px; }
.detail .vbar .down { height: 13px; margin-bottom: 7px; }
.main-mat td:not(.no) { color: #800080; }
.grid .flag { background: linear-gradient(45deg, transparent 50%, #f00 50%) no-repeat top right / 6px 6px; }
.detail input { appearance: none; display: block; width: 12px; height: 12px; margin: 0 auto; border: 1px solid #999; }
.detail input:checked::before { content: ""; display: block; width: 7px; height: 4px; margin: 2px 0 0 1px; border: solid #666674; border-width: 0 0 1px 1px; rotate: -45deg; }
.hbar { flex: none; display: flex; height: 14px; background: #e3e3e3; }
.hbar b { width: 900px; background: #cbcbcb; }
.hbar .right { margin-left: auto; }

/* query dialog */
.dialog { position: absolute; left: 445px; right: 67px; top: 209px; bottom: 0; display: flex; flex-direction: column; background: #f0f0f0; border: 1px solid #8f8f9a; border-bottom: 0; overflow: hidden; }
.title { flex: none; display: flex; align-items: center; gap: 6px; height: 31px; padding: 0 14px 0 12px; background: #00a8f3; color: #fff; }
.title .max { margin: 0 12px 0 auto; }
.bar { flex: none; display: flex; align-items: center; gap: 6px; height: 31px; padding-right: 5px; border-bottom: 1px solid #7fc36a; }
.q-tabs { display: flex; align-self: stretch; margin-right: auto; }
.q-tabs button { padding: 0 16px 0 15px; background: #fff; border-right: 1px solid #b7e59c; border-top: 1px solid #b7e59c; }
.q-tabs .on { padding: 0 15px; background: #7fc36a; color: #fff; font-weight: 700; font-size: 13px; border: 0; }
.act { width: 85px; height: 25px; border: 1px solid #999; }
.q-body { flex: 1; min-height: 0; display: flex; gap: 1px; padding: 4px 4px 0; }
.q-left { flex: none; width: 280px; display: flex; flex-direction: column; gap: 3px; }
.q-left select, .q-left input { flex: none; width: 100%; height: 22px; padding: 0 2px; border: 1px solid #a0a0a0; border-radius: 0; background: #fff; }
.q-left select { appearance: none; background: conic-gradient(from -45deg at 50% 100%, #666674 90deg, transparent 0) no-repeat right 6px center / 6px 3px, #fff; }
.q-left input::placeholder { color: #808080; }
.q-tree { flex: 1; min-height: 0; display: flex; justify-content: space-between; overflow: hidden; background: #fff; border: 1px solid #808088; border-bottom: 0; }
.q-tree li { display: flex; align-items: center; height: 21px; white-space: nowrap; }
.l1 { padding-left: 8px; gap: 8px; }
.l2 { padding-left: 28px; gap: 8px; }
.l3 { padding-left: 48px; gap: 9px; }
.l3o { gap: 8px; }
.l4 { padding-left: 82px; }
.l4.on { color: #0a84ff; }
.tbar { width: 14px; background: #d2d2d2; }
.tbar .up { width: 14px; height: 15px; }
.tbar b { height: 180px; margin-top: 8px; background: #fff; border: solid #999; border-width: 2px 1px; }
.q-right { flex: 1; min-width: 0; overflow: hidden; background: #fff; border-top: 1px solid #d0d0d0; }
.q-no { width: 26px; } .q-code { width: 79px; } .q-unit { width: 60px; } .q-price { width: 91px; } .q-end { width: 8px; }
.q-grid tr { height: 26px; }
.q-grid th { height: 26px; }

/* review marks */
.mark { position: absolute; border: 3px solid #fc3838; pointer-events: none; }
.m1 { left: 158px; top: 27px; width: 1065px; height: 174px; }
.m2 { left: 807px; top: 273px; width: 320px; height: 111px; }
.m3 { left: 995px; top: 294px; width: 57px; height: 86px; }
```
